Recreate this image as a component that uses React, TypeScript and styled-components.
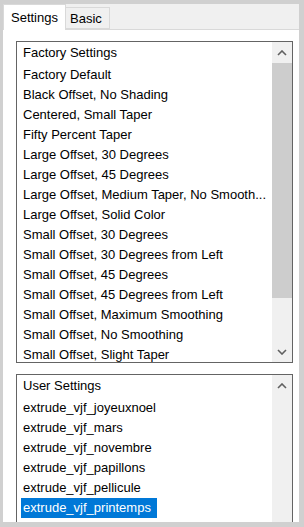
import React from 'react'
import styled, { createGlobalStyle } from 'styled-components'

const GlobalStyle = createGlobalStyle`
  html, body {
    margin: 0;
    padding: 0;
    background: #d0d0d0;
  }
  body {
    font-family: "Liberation Sans", Arial, sans-serif;
    font-size: 13px;
    color: #000;
  }
`

const Frame = styled.div`
  width: 304px;
  height: 527px;
  box-sizing: border-box;
  padding: 4px 5px 5px 3px;
  background: #d0d0d0;
  overflow: hidden;
`

const Window = styled.div`
  height: 100%;
  display: flex;
  flex-direction: column;
  overflow: hidden;
`

const TabBar = styled.div`
  height: 25px;
  flex: none;
  display: flex;
  align-items: flex-end;
  background: #f0f0f0;
  border-bottom: 1px solid #d9d9d9;
`

const Tab = styled.div<{ $active?: boolean }>`
  box-sizing: border-box;
  height: ${ (p) => (p.$active ? '26px' : '22px') };
  margin-bottom: ${ (p) => (p.$active ? '-1px' : '0') };
  padding: ${ (p) => (p.$active ? '0 7px' : '1px 7px 0 4px') };
  display: flex;
  align-items: center;
  background: ${ (p) => (p.$active ? '#ffffff' : '#f0f0f0') };
  border: 1px solid #d9d9d9;
  border-bottom: ${ (p) => (p.$active ? 'none' : '1px solid #d9d9d9') };
  margin-left: ${ (p) => (p.$active ? '0' : '-1px') };
  position: relative;
  z-index: ${ (p) => (p.$active ? 1 : 0) };
`

const Panel = styled.div`
  flex: 1;
  background: #fff;
  padding: 11px 6px 0 13px;
  overflow: hidden;
  display: flex;
  flex-direction: column;
`

const ListBox = styled.div<{ $height: number; $gap?: number }>`
  flex: none;
  height: ${ (p) => p.$height }px;
  margin-top: ${ (p) => p.$gap || 0 }px;
  box-sizing: border-box;
  border: 1px solid #646464;
  display: flex;
`

const ListContent = styled.div`
  flex: 1;
  min-width: 0;
  padding-top: 1px;
  overflow: hidden;
`

const Header = styled.div`
  line-height: 20px;
  padding: 0 0 2px 6px;
  white-space: nowrap;
`

const Row = styled.div`
  line-height: 20px;
  padding-left: 4px;
  white-space: nowrap;
  overflow: hidden;
`

const Label = styled.span<{ $selected?: boolean }>`
  display: inline-block;
  padding: 0 6px 0 2px;
  background: ${ (p) => (p.$selected ? '#0078d7' : 'transparent') };
  color: ${ (p) => (p.$selected ? '#fff' : '#000') };
`

const ScrollBar = styled.div`
  width: 20px;
  flex: none;
  background: #f0f0f0;
  display: flex;
  flex-direction: column;
`

const ArrowButton = styled.div<{ $end?: boolean }>`
  height: 21px;
  flex: none;
  display: flex;
  align-items: center;
  justify-content: center;
  margin-top: ${ (p) => (p.$end ? 'auto' : '0') };
`

const Thumb = styled.div<{ $size: number }>`
  height: ${ (p) => p.$size }px;
  background: #cdcdcd;
`

const Chevron = ({ down }: { down?: boolean }) => (
	<svg width='10' height='6' viewBox='0 0 10 6'>
		<path
			d={down ? 'M1 1 L5 5 L9 1' : 'M1 5 L5 1 L9 5'}
			fill='none'
			stroke='#606060'
			strokeWidth='1.6'
		/>
	</svg>
)

const factory = [
	'Factory Default',
	'Black Offset, No Shading',
	'Centered, Small Taper',
	'Fifty Percent Taper',
	'Large Offset, 30 Degrees',
	'Large Offset, 45 Degrees',
	'Large Offset, Medium Taper, No Smooth...',
	'Large Offset, Solid Color',
	'Small Offset, 30 Degrees',
	'Small Offset, 30 Degrees from Left',
	'Small Offset, 45 Degrees',
	'Small Offset, 45 Degrees from Left',
	'Small Offset, Maximum Smoothing',
	'Small Offset, No Smoothing',
	'Small Offset, Slight Taper'
]

const user = [
	'extrude_vjf_joyeuxnoel',
	'extrude_vjf_mars',
	'extrude_vjf_novembre',
	'extrude_vjf_papillons',
	'extrude_vjf_pellicule',
	'extrude_vjf_printemps'
]

const App = () => (
	<>
		<GlobalStyle />
		<Frame>
			<Window>
				<TabBar>
					<Tab $active>Settings</Tab>
					<Tab>Basic</Tab>
				</TabBar>
				<Panel>
					<ListBox $height={322}>
						<ListContent>
							<Header>Factory Settings</Header>
							{factory.map((name) => (
								<Row key={name}>
									<Label>{name}</Label>
								</Row>
							))}
						</ListContent>
						<ScrollBar>
							<ArrowButton>
								<Chevron />
							</ArrowButton>
							<Thumb $size={235} />
							<ArrowButton $end>
								<Chevron down />
							</ArrowButton>
						</ScrollBar>
					</ListBox>
					<ListBox $height={200} $gap={11}>
						<ListContent>
							<Header>User Settings</Header>
							{user.map((name, i) => (
								<Row key={name}>
									<Label $selected={i === user.length - 1}>{name}</Label>
								</Row>
							))}
						</ListContent>
						<ScrollBar>
							<ArrowButton>
								<Chevron />
							</ArrowButton>
						</ScrollBar>
					</ListBox>
				</Panel>
			</Window>
		</Frame>
	</>
)

export default App
